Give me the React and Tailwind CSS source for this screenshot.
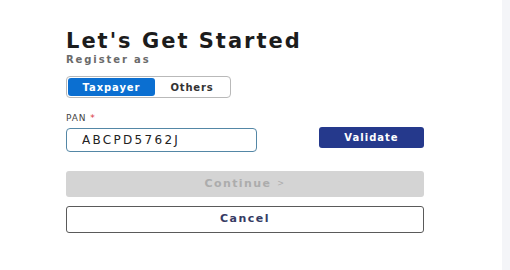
import React, { useState } from "react"

const font = { fontFamily: '"DejaVu Sans", "Liberation Sans", Arial, sans-serif' }

export default function App() {
  const [role, setRole] = useState("taxpayer")
  const [pan, setPan] = useState("ABCPD5762J")

  return (
    <div className="flex w-[510px] h-[270px] bg-white" style={font}>
      <div className="flex-1 pl-[66px] pt-[31px]">
        {/* Heading */}
        <h1 className="text-[21px] leading-[20px] font-bold tracking-[2px] text-[#1c1c1c]">Let's Get Started</h1>
        <p className="mt-[3px] text-[10px] leading-[12px] font-bold tracking-[1.9px] text-[#6a6a6a]">Register as</p>

        {/* Role toggle */}
        <div className="mt-[10px] flex w-[165px] h-[22px] p-[1px] border border-[#b9b9b9] rounded-[4px]">
          <button
            onClick={() => setRole("taxpayer")}
            className={`w-[87px] h-full rounded-[3px] text-[10px] font-bold tracking-[0.9px] ${
              role === "taxpayer" ? "bg-[#0b6fd1] text-white" : "text-[#333]"
            }`}
          >
            Taxpayer
          </button>
          <button
            onClick={() => setRole("others")}
            className={`flex-1 h-full rounded-[3px] text-[10px] font-bold tracking-[0.8px] ${
              role === "others" ? "bg-[#0b6fd1] text-white" : "text-[#333]"
            }`}
          >
            Others
          </button>
        </div>

        {/* PAN */}
        <label className="block mt-[14px] text-[9px] leading-[12px] tracking-[0.9px] text-[#444]">
          PAN <span className="text-[#d9363e]">*</span>
        </label>
        <div className="mt-[4px] flex items-start w-[358px]">
          <input
            value={pan}
            onChange={(e) => setPan(e.target.value)}
            className="w-[191px] h-[24px] px-[15px] border border-[#5487a6] rounded-[4px] text-[12px] tracking-[2.3px] text-[#222] outline-none"
          />
          <button className="ml-auto mt-[-1px] w-[105px] h-[21px] rounded-[3px] bg-[#25398c] text-white text-[10px] font-bold tracking-[1px]">
            Validate
          </button>
        </div>

        {/* Actions */}
        <button
          disabled
          className="mt-[19px] flex items-center justify-center gap-[6px] w-[358px] h-[26px] rounded-[3px] bg-[#d4d4d4] text-[#acacac] text-[11px] font-bold tracking-[1.4px]"
        >
          <span>Continue</span>
          <span className="text-[8px] font-normal">&gt;</span>
        </button>
        <button className="mt-[9px] w-[358px] h-[27px] rounded-[3px] border border-[#5a5a5a] bg-white text-[#363b64] text-[11px] font-bold tracking-[1.5px]">
          Cancel
        </button>
      </div>
      <div className="w-[8px] bg-[#f4f5f8]" />
    </div>
  )
}
